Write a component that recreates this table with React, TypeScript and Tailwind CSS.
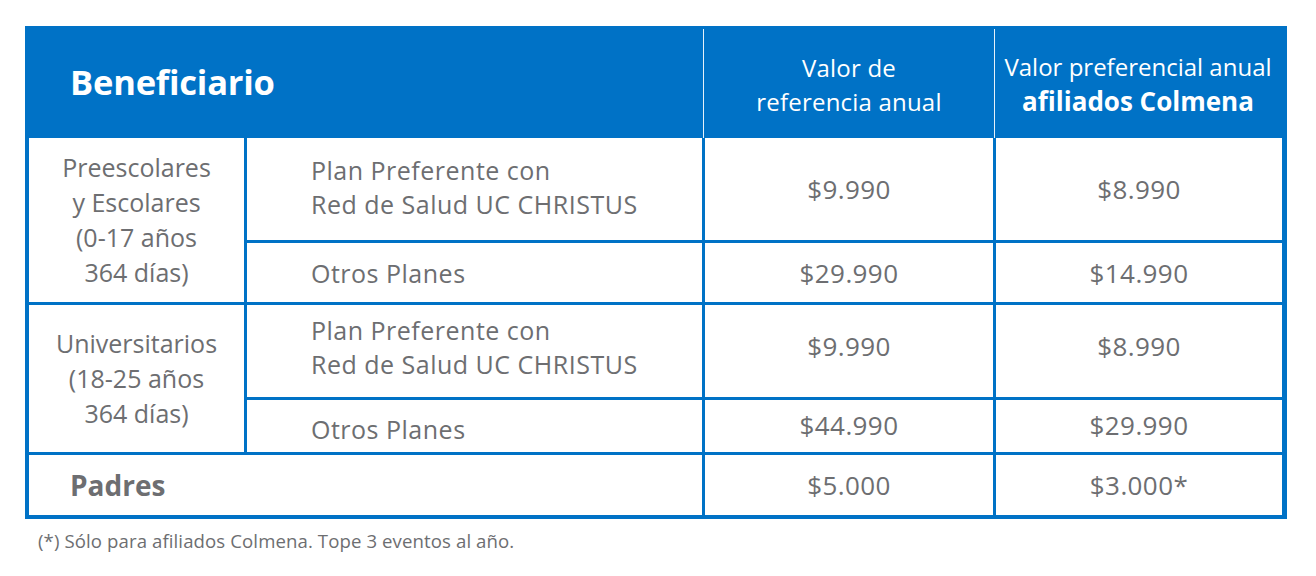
import React from "react";

const F = { fontFamily: '"Open Sans", "Noto Sans", sans-serif' };

function Val({ children, pad = "" }: { children: React.ReactNode; pad?: string }) {
  return (
    <div className={"bg-white flex items-center justify-center text-[26px] leading-[34px] tracking-[0.4px] text-[#6d6e71] " + pad}>
      {children}
    </div>
  );
}

function Plan({ children, pad = "" }: { children: React.ReactNode; pad?: string }) {
  return (
    <div className={"bg-white flex items-center pl-[64px] text-[25px] leading-[34px] tracking-[0.5px] text-[#6d6e71] " + pad}>
      <div>{children}</div>
    </div>
  );
}

export default function App() {
  return (
    <div className="bg-white w-[1316px] h-[576px] pl-[25px] pt-[26px]" style={F}>
      <div className="w-[1262px] bg-[#0072c6]">
        {/* header */}
        <div className="flex h-[112px] pl-[4px] pr-[5px] pt-[3px] text-white">
          <div className="w-[674px] flex items-center pl-[41px] -mt-[3px]">
            <span className="text-[34.5px] font-bold tracking-[-0.2px]">Beneficiario</span>
          </div>
          <div className="w-[1px] bg-white/90" />
          <div className="w-[290px] flex items-center justify-center text-center text-[24px] leading-[34px] tracking-[0.2px] pt-[2px]">
            <div>
              Valor de
              <br />
              referencia anual
            </div>
          </div>
          <div className="w-[1px] bg-white/90" />
          <div className="w-[286px] flex items-center justify-center text-center text-[24px] leading-[34px] pt-[2px]">
            <div>
              Valor preferencial anual
              <br />
              <span className="font-bold text-[26px]">afiliados Colmena</span>
            </div>
          </div>
        </div>
        {/* body */}
        <div className="grid grid-cols-[215px_455px_288px_286px] grid-rows-[102px_59px_92px_52px_60px] gap-[3px] pl-[4px] pr-[5px] pb-[4px]">
          <div className="row-span-2 bg-white flex items-center justify-center text-center text-[25px] leading-[35px] text-[#6d6e71]">
            <div>
              Preescolares
              <br />y Escolares
              <br />
              (0-17 años
              <br />
              364 días)
            </div>
          </div>
          <Plan pad="pb-[4px]">
            Plan Preferente con
            <br />
            Red de Salud UC CHRISTUS
          </Plan>
          <Val>$9.990</Val>
          <Val>$8.990</Val>
          <Plan>Otros Planes</Plan>
          <Val>$29.990</Val>
          <Val>$14.990</Val>

          <div className="row-span-2 bg-white flex items-center justify-center text-center text-[25px] leading-[35px] text-[#6d6e71]">
            <div>
              Universitarios
              <br />
              (18-25 años
              <br />
              364 días)
            </div>
          </div>
          <Plan pad="pb-[9px]">
            Plan Preferente con
            <br />
            Red de Salud UC CHRISTUS
          </Plan>
          <Val pad="pb-[11px]">$9.990</Val>
          <Val pad="pb-[11px]">$8.990</Val>
          <Plan pad="pt-[6px]">Otros Planes</Plan>
          <Val pad="pb-[3px]">$44.990</Val>
          <Val pad="pb-[3px]">$29.990</Val>

          <div className="col-span-2 bg-white flex items-center pl-[41px] text-[28px] font-bold text-[#6d6e71]">
            Padres
          </div>
          <Val>$5.000</Val>
          <Val>$3.000*</Val>
        </div>
      </div>
      <div className="pl-[13px] pt-[10px] text-[18.6px] leading-[24px] tracking-[0.1px] text-[#6d6e71]">
        (*) Sólo para afiliados Colmena. Tope 3 eventos al año.
      </div>
    </div>
  );
}
